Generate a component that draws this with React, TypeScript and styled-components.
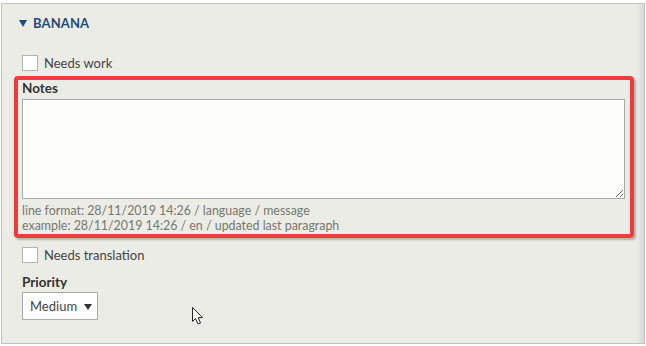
import styled, { createGlobalStyle } from "styled-components";

const GlobalStyle = createGlobalStyle`
  html, body {
    margin: 0;
    padding: 0;
    background: #ffffff;
  }
  body {
    font-family: Lato, "Open Sans", "DejaVu Sans", sans-serif;
    color: #3a3a3a;
  }
`;

const Panel = styled.div`
  position: relative;
  box-sizing: border-box;
  margin: 3px 0 0 1px;
  width: 644px;
  height: 341px;
  background: #ecece6;
  border: 1px solid #c3c3c0;
  box-shadow: inset -7px 0 6px -5px rgba(0, 0, 0, 0.12);
  padding: 9px 0 0 16px;
  display: flex;
  flex-direction: column;
`;

const Header = styled.div`
  display: flex;
  align-items: center;
  gap: 6px;
  height: 20px;
  padding-left: 1px;
  color: #1d4b7c;
  font-weight: 700;
  font-size: 13px;
  letter-spacing: 0.1px;
`;

const Triangle = styled.span`
  width: 0;
  height: 0;
  border-left: 4px solid transparent;
  border-right: 4px solid transparent;
  border-top: 7px solid #1d4b7c;
  margin-top: 1px;
`;

const CheckRow = styled.label<{ top: number }>`
  display: flex;
  align-items: center;
  gap: 6px;
  margin: ${(p) => p.top}px 0 0 4px;
  height: 16px;
  font-size: 13px;
  color: #444;
`;

const Box = styled.span`
  box-sizing: border-box;
  width: 16px;
  height: 16px;
  background: #fff;
  border: 1px solid #b3b3b3;
`;

const Highlight = styled.div`
  box-sizing: border-box;
  width: 620px;
  height: 162px;
  margin: 5px 0 0 -4px;
  border: 4px solid #ee3b3c;
  border-radius: 4px;
  box-shadow: 2px 2px 2px rgba(0, 0, 0, 0.25);
  padding: 0 5px 0 4px;
  display: flex;
  flex-direction: column;
`;

const Label = styled.div`
  font-weight: 700;
  font-size: 13.5px;
  color: #333;
  height: 17px;
  line-height: 17px;
`;

const TextArea = styled.textarea`
  box-sizing: border-box;
  display: block;
  width: 603px;
  height: 100px;
  margin-top: 2px;
  background: #fcfcfa;
  border: 1px solid #a9a9a9;
  border-radius: 0;
  resize: vertical;
  outline: none;
  font-family: inherit;
`;

const Help = styled.div`
  margin-top: 4px;
  font-size: 12.4px;
  line-height: 15px;
  color: #77776f;
`;

const PriorityBlock = styled.div`
  margin: 11px 0 0 4px;
  display: flex;
  flex-direction: column;
  align-items: flex-start;
  gap: 1px;
`;

const Select = styled.div`
  box-sizing: border-box;
  width: 76px;
  height: 28px;
  background: #fff;
  border: 1px solid #aaa;
  display: flex;
  align-items: center;
  gap: 7px;
  padding-left: 7px;
  font-size: 13px;
  color: #444;
`;

const Caret = styled.span`
  width: 0;
  height: 0;
  border-left: 4px solid transparent;
  border-right: 4px solid transparent;
  border-top: 6px solid #333;
  margin-top: 2px;
`;

const Cursor = styled.svg`
  position: absolute;
  left: 189px;
  top: 302px;
`;

export default function App() {
  return (
    <>
      <GlobalStyle />
      <Panel>
        <Header>
          <Triangle />
          BANANA
        </Header>
        <CheckRow top={22}>
          <Box />
          Needs work
        </CheckRow>
        <Highlight>
          <Label>Notes</Label>
          <TextArea />
          <Help>
            line format: 28/11/2019 14:26 / language / message
            <br />
            example: 28/11/2019 14:26 / en / updated last paragraph
          </Help>
        </Highlight>
        <CheckRow top={9}>
          <Box />
          Needs translation
        </CheckRow>
        <PriorityBlock>
          <Label>Priority</Label>
          <Select>
            Medium
            <Caret />
          </Select>
        </PriorityBlock>
        <Cursor width="14" height="20" viewBox="0 0 14 20">
          <path
            d="M1.5 1.5 L1.5 15.5 L4.5 12.5 L7 18 L9.5 17 L7.2 11.6 L11.5 11.6 Z"
            fill="#fff"
            stroke="#222"
            strokeWidth="1"
            strokeLinejoin="miter"
          />
        </Cursor>
      </Panel>
    </>
  );
}
